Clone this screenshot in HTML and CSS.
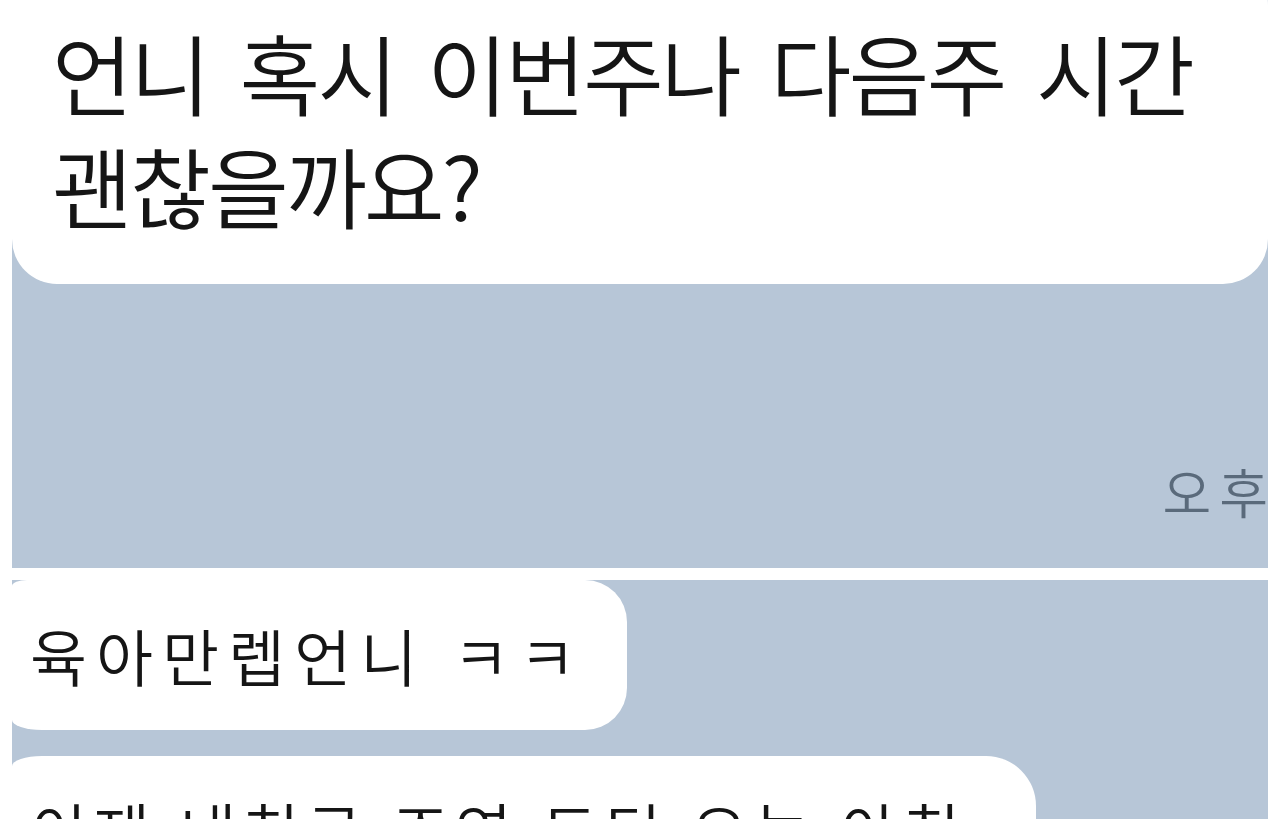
FILE: index.html
```html
<!DOCTYPE html>
<html lang="ko">
<head>
<meta charset="utf-8">
<title>채팅</title>
<link rel="stylesheet" href="styles.css">
</head>
<body>
<div class="page">
  <section class="panel panel-top">
    <div class="bubble bubble-big">언니 혹시 이번주나 다음주 시간<br>괜찮을까요?</div>
    <div class="time-row"><span class="time">오후</span></div>
  </section>
  <section class="panel panel-bottom">
    <div class="bubble bubble-small">육아만렙언니 ㅋㅋ</div>
    <div class="bubble bubble-small bubble-wide">이제 내친구 조연 도딘 오늘 아침</div>
  </section>
</div>
</body>
</html>
```
FILE: styles.css
```css
html, body {
  margin: 0;
  padding: 0;
  background: #ffffff;
}

body {
  font-family: "Noto Sans CJK KR", "Noto Sans", sans-serif;
  font-weight: 350;
  color: #151515;
  overflow: hidden;
}

.page {
  height: 819px;
  padding: 0 12px;
  display: flex;
  flex-direction: column;
  gap: 12px;
  overflow: hidden;
}

.panel {
  background: #b7c6d7;
  overflow: hidden;
  display: flex;
  flex-direction: column;
}

.panel-top {
  height: 568px;
  flex: none;
}

.bubble {
  background: #ffffff;
  white-space: nowrap;
}

.bubble-big {
  margin-top: -40px;
  padding: 54px 40px 44px 40px;
  font-size: 88px;
  line-height: 113px;
  letter-spacing: -3px;
  word-spacing: 10px;
  border-radius: 0 45px 45px 45px;
}

.time-row {
  flex: 1;
  display: flex;
  align-items: flex-end;
  justify-content: flex-end;
  padding-bottom: 50px;
}

.time {
  font-size: 53px;
  line-height: 53px;
  letter-spacing: 8px;
  color: #5a6a7b;
  margin-right: -8px;
}

.panel-bottom {
  flex: 1;
  align-items: flex-start;
  gap: 26px;
}

.bubble-small {
  font-size: 62px;
  line-height: 80px;
  letter-spacing: 9px;
  padding: 35px 42px 35px 18px;
  border-radius: 15px 42px 42px 30px / 6px 42px 42px 10px;
}

.bubble-wide {
  letter-spacing: 6px;
  padding-top: 33px;
  padding-right: 70px;
  border-radius: 30px 50px 50px 30px / 10px 50px 50px 10px;
}
```
